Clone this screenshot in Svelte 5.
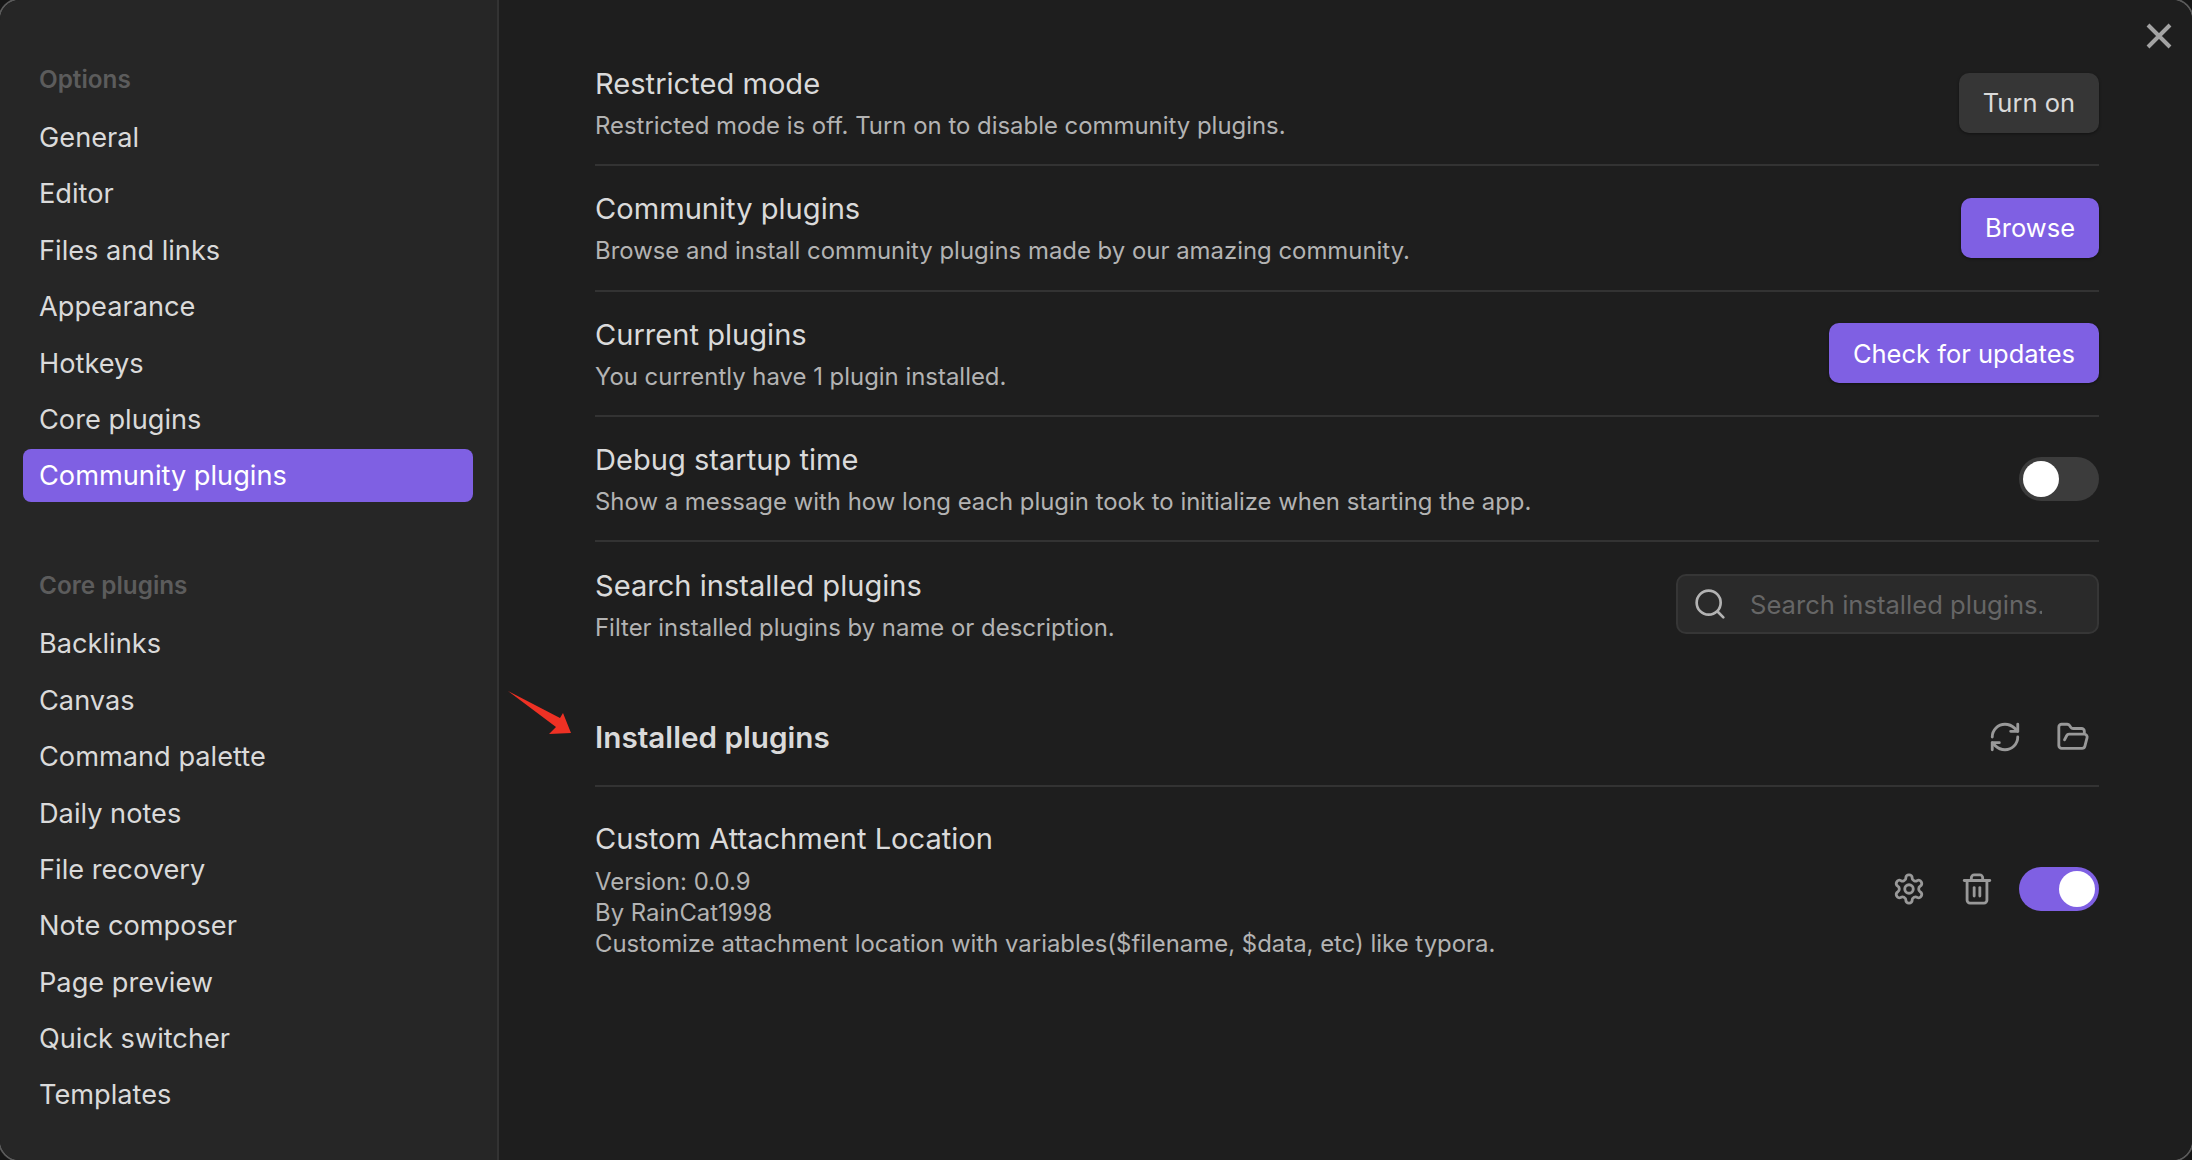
<script>
  const optionItems = ['General', 'Editor', 'Files and links', 'Appearance', 'Hotkeys', 'Core plugins', 'Community plugins'];
  const coreItems = ['Backlinks', 'Canvas', 'Command palette', 'Daily notes', 'File recovery', 'Note composer', 'Page preview', 'Quick switcher', 'Templates'];
</script>

<div class="modal">
  <aside class="sidebar">
    <div class="group-label">Options</div>
    {#each optionItems as item}
      <div class="nav-item" class:active={item === 'Community plugins'}>{item}</div>
    {/each}
    <div class="group-label second">Core plugins</div>
    {#each coreItems as item}
      <div class="nav-item">{item}</div>
    {/each}
  </aside>

  <main class="content">
    <button class="close" aria-label="Close">
      <svg viewBox="0 0 24 24"><path d="M18 6 6 18M6 6l12 12" /></svg>
    </button>

    <section class="row">
      <div class="info">
        <div class="name">Restricted mode</div>
        <div class="desc">Restricted mode is off. Turn on to disable community plugins.</div>
      </div>
      <button class="btn">Turn on</button>
    </section>

    <section class="row">
      <div class="info">
        <div class="name">Community plugins</div>
        <div class="desc">Browse and install community plugins made by our amazing community.</div>
      </div>
      <button class="btn cta">Browse</button>
    </section>

    <section class="row">
      <div class="info">
        <div class="name">Current plugins</div>
        <div class="desc">You currently have 1 plugin installed.</div>
      </div>
      <button class="btn cta">Check for updates</button>
    </section>

    <section class="row">
      <div class="info">
        <div class="name">Debug startup time</div>
        <div class="desc">Show a message with how long each plugin took to initialize when starting the app.</div>
      </div>
      <div class="toggle"><span class="knob"></span></div>
    </section>

    <section class="row last">
      <div class="info">
        <div class="name">Search installed plugins</div>
        <div class="desc">Filter installed plugins by name or description.</div>
      </div>
      <div class="search">
        <svg class="search-icon" viewBox="0 0 24 24"><circle cx="11" cy="11" r="9" /><path d="m18 18 4 4" /></svg>
        <span class="placeholder">Search installed plugins...</span>
      </div>
    </section>

    <section class="heading-row">
      <h2>Installed plugins</h2>
      <div class="actions">
        <svg class="icon" viewBox="0 0 24 24">
          <path d="M3 12a9 9 0 0 1 9-9 9.75 9.75 0 0 1 6.74 2.74L21 8" /><path d="M21 3v5h-5" />
          <path d="M21 12a9 9 0 0 1-9 9 9.75 9.75 0 0 1-6.74-2.74L3 16" /><path d="M8 16H3v5" />
        </svg>
        <svg class="icon" viewBox="0 0 24 24">
          <path d="m6 14 1.5-2.9A2 2 0 0 1 9.24 10H20a2 2 0 0 1 1.94 2.5l-1.54 6a2 2 0 0 1-1.95 1.5H4a2 2 0 0 1-2-2V5a2 2 0 0 1 2-2h3.9a2 2 0 0 1 1.69.9l.81 1.2a2 2 0 0 0 1.67.9H18a2 2 0 0 1 2 2v2" />
        </svg>
      </div>
    </section>

    <section class="plugin">
      <div class="info">
        <div class="name">Custom Attachment Location</div>
        <div class="desc lines">
          <div>Version: 0.0.9</div>
          <div>By RainCat1998</div>
          <div>Customize attachment location with variables($filename, $data, etc) like typora.</div>
        </div>
      </div>
      <div class="plugin-controls">
        <svg class="icon" viewBox="0 0 24 24">
          <path d="M12.22 2h-.44a2 2 0 0 0-2 2v.18a2 2 0 0 1-1 1.73l-.43.25a2 2 0 0 1-2 0l-.15-.08a2 2 0 0 0-2.73.73l-.22.38a2 2 0 0 0 .73 2.73l.15.1a2 2 0 0 1 1 1.72v.51a2 2 0 0 1-1 1.74l-.15.09a2 2 0 0 0-.73 2.73l.22.38a2 2 0 0 0 2.73.73l.15-.08a2 2 0 0 1 2 0l.43.25a2 2 0 0 1 1 1.73V20a2 2 0 0 0 2 2h.44a2 2 0 0 0 2-2v-.18a2 2 0 0 1 1-1.73l.43-.25a2 2 0 0 1 2 0l.15.08a2 2 0 0 0 2.73-.73l.22-.39a2 2 0 0 0-.73-2.73l-.15-.08a2 2 0 0 1-1-1.74v-.5a2 2 0 0 1 1-1.74l.15-.09a2 2 0 0 0 .73-2.73l-.22-.38a2 2 0 0 0-2.73-.73l-.15.08a2 2 0 0 1-2 0l-.43-.25a2 2 0 0 1-1-1.73V4a2 2 0 0 0-2-2z" />
          <circle cx="12" cy="12" r="3" />
        </svg>
        <svg class="icon trash" viewBox="0 0 24 24">
          <path d="M3 6h18" /><path d="M19 6v14c0 1-1 2-2 2H7c-1 0-2-1-2-2V6" />
          <path d="M8 6V4c0-1 1-2 2-2h4c1 0 2 1 2 2v2" /><path d="M10 11v6" /><path d="M14 11v6" />
        </svg>
        <div class="toggle on"><span class="knob"></span></div>
      </div>
    </section>

    <svg class="arrow" viewBox="0 0 64 45">
      <polygon points="0,0 52,27 55,22 63,42 41,43 48,36" />
    </svg>
  </main>
</div>

<style>
  :global(body) {
    margin: 0;
    background: #161616;
    overflow: hidden;
  }

  .modal {
    display: flex;
    width: 2196px;
    height: 1164px;
    margin: -2px;
    box-sizing: border-box;
    border: 2px solid #5a5a5a;
    border-radius: 22px;
    overflow: hidden;
    font-family: Inter, 'Noto Sans', sans-serif;
    color: #dadada;
  }

  .sidebar {
    width: 499px;
    flex: none;
    box-sizing: border-box;
    padding: 62px 24px 0 23px;
    background: #262626;
    border-right: 2px solid #333;
  }

  .group-label {
    height: 35px;
    padding-left: 16px;
    margin-bottom: 14px;
    line-height: 35px;
    font-size: 24.3px;
    font-weight: 600;
    color: #5c5c5c;
  }

  .group-label.second {
    margin-top: 66px;
  }

  .nav-item {
    height: 53px;
    margin-bottom: 3.4px;
    padding-left: 16px;
    line-height: 53px;
    font-size: 27.2px;
    border-radius: 8px;
  }

  .nav-item.active {
    background: #7f60e3;
    color: #fff;
  }

  .content {
    position: relative;
    flex: 1;
    box-sizing: border-box;
    padding: 41px 93px 0 96px;
    background: #1e1e1e;
  }

  .close {
    position: absolute;
    top: 14px;
    right: 11px;
    width: 44px;
    height: 44px;
    padding: 0;
    border: 0;
    background: none;
  }

  .close svg {
    display: block;
    width: 100%;
    height: 100%;
    fill: none;
    stroke: #a3a3a3;
    stroke-width: 2.2;
  }

  .row {
    display: flex;
    align-items: center;
    justify-content: space-between;
    box-sizing: border-box;
    height: 125.33px;
    border-bottom: 2px solid #333;
  }

  .row.last {
    height: 124.33px;
    border-bottom: 0;
  }

  .name {
    font-size: 29.1px;
    line-height: 40px;
    color: #dadada;
  }

  .desc {
    margin-top: 6px;
    font-size: 23.92px;
    line-height: 31px;
    color: #b3b3b3;
  }

  .btn {
    height: 60px;
    padding: 0 24px;
    border: 0;
    border-radius: 10px;
    background: #363636;
    color: #dadada;
    font: inherit;
    font-size: 25.5px;
    box-shadow: 0 1px 3px rgba(0, 0, 0, 0.4);
  }

  .btn.cta {
    background: #7f60e3;
    color: #fff;
  }

  .toggle {
    display: flex;
    align-items: center;
    width: 80px;
    height: 44px;
    box-sizing: border-box;
    padding: 0 4px;
    border-radius: 22px;
    background: #3c3c3c;
  }

  .toggle.on {
    justify-content: flex-end;
    background: #7f60e3;
  }

  .knob {
    width: 36px;
    height: 36px;
    border-radius: 50%;
    background: #fff;
  }

  .search {
    display: flex;
    align-items: center;
    width: 423px;
    height: 60px;
    box-sizing: border-box;
    padding: 0 16px;
    border: 2px solid #363636;
    border-radius: 10px;
    background: #2a2a2a;
    overflow: hidden;
  }

  .search-icon {
    width: 32px;
    height: 32px;
    flex: none;
    fill: none;
    stroke: #b3b3b3;
    stroke-width: 2;
    stroke-linecap: round;
  }

  .placeholder {
    margin-left: 24px;
    width: 292px;
    overflow: hidden;
    white-space: nowrap;
    font-size: 25.6px;
    color: #666;
  }

  .heading-row {
    display: flex;
    align-items: center;
    justify-content: space-between;
    box-sizing: border-box;
    height: 120px;
    padding-top: 22px;
    border-bottom: 2px solid #333;
  }

  h2 {
    margin: 0;
    font-size: 29.7px;
    font-weight: 600;
    color: #dadada;
  }

  .actions {
    display: flex;
    gap: 34px;
    margin-right: 9px;
  }

  .icon {
    width: 34px;
    height: 34px;
    flex: none;
    fill: none;
    stroke: #999;
    stroke-width: 2;
    stroke-linecap: round;
    stroke-linejoin: round;
  }

  .plugin {
    display: flex;
    align-items: center;
    justify-content: space-between;
    padding-top: 32px;
  }

  .lines {
    margin-top: 7px;
  }

  .plugin-controls {
    display: flex;
    align-items: center;
    gap: 34px;
  }

  .icon.trash {
    margin-right: -9px;
  }

  .arrow {
    position: absolute;
    top: 691px;
    left: 9px;
    width: 64px;
    height: 45px;
    fill: #ee3124;
  }
</style>
